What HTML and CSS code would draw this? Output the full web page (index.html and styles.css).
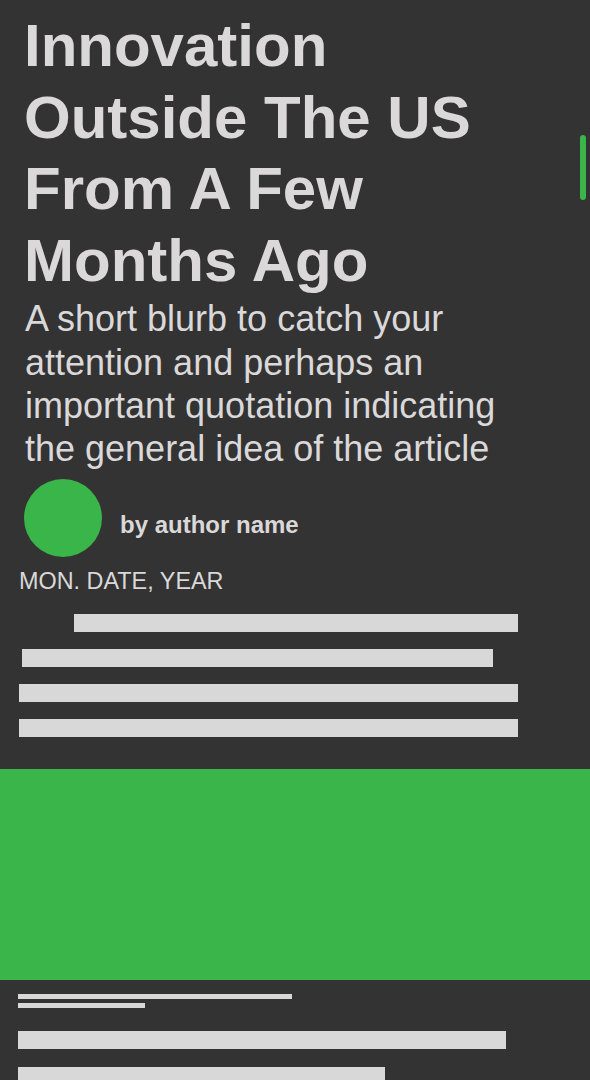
FILE: index.html
```html
<!DOCTYPE html>
<html lang="en">
<head>
<meta charset="utf-8">
<title>Article</title>
<link rel="stylesheet" href="styles.css">
</head>
<body>
<article class="article">
  <header class="intro">
    <h1 class="title">Innovation Outside The US From A Few Months Ago</h1>
    <p class="blurb">A short blurb to catch your attention and perhaps an important quotation indicating the general idea of the article</p>
    <div class="byline">
      <div class="avatar"></div>
      <span class="author">by author name</span>
    </div>
  </header>
  <div class="date">MON. DATE, YEAR</div>
  <div class="lines lines-lead">
    <div class="bar bar-1"></div>
    <div class="bar bar-2"></div>
    <div class="bar bar-3"></div>
    <div class="bar bar-3"></div>
  </div>
  <div class="hero"></div>
  <div class="caption">
    <div class="thin thin-1"></div>
    <div class="thin thin-2"></div>
  </div>
  <div class="lines lines-body">
    <div class="bar bar-4"></div>
    <div class="bar bar-5"></div>
  </div>
</article>
<div class="scroll-thumb"></div>
</body>
</html>
```

FILE: styles.css
```css
html, body {
  margin: 0;
  padding: 0;
  background: #333333;
}

body {
  font-family: "Liberation Sans", Arial, sans-serif;
  color: #dad8d9;
  width: 590px;
  height: 1080px;
  overflow: hidden;
}

.intro {
  padding: 10px 24px 0 24px;
}

.title {
  margin: 0;
  font-size: 60px;
  font-weight: 700;
  line-height: 71.6px;
}

.blurb {
  max-width: 505px;
  margin: 1px 0 0 1px;
  font-size: 36px;
  font-weight: 400;
  line-height: 43.2px;
}

.byline {
  display: flex;
  align-items: center;
  margin-top: 9px;
}

.avatar {
  width: 78px;
  height: 78px;
  border-radius: 50%;
  background: #3ab54a;
  flex: none;
}

.author {
  margin-left: 18px;
  padding-top: 13px;
  font-size: 24px;
  font-weight: 700;
  line-height: 27px;
}

.date {
  margin-top: 11px;
  padding-left: 19px;
  font-size: 23.4px;
  line-height: 27.6px;
  font-weight: 400;
}

.lines {
  display: flex;
  flex-direction: column;
  align-items: flex-start;
  gap: 17px;
  padding-left: 19px;
}

.lines-lead {
  margin-top: 18px;
}

.bar {
  height: 18px;
  background: #d9d8d9;
}

.bar-1 {
  width: 444px;
  margin-left: 55px;
}

.bar-2 {
  width: 471px;
  margin-left: 3px;
}

.bar-3 {
  width: 499px;
}

.hero {
  margin-top: 32px;
  height: 211px;
  background: #3ab54a;
}

.caption {
  display: flex;
  flex-direction: column;
  align-items: flex-start;
  gap: 4px;
  margin-top: 14px;
  padding-left: 18px;
}

.thin {
  height: 5px;
  background: #d9d8d9;
}

.thin-1 {
  width: 274px;
}

.thin-2 {
  width: 127px;
}

.lines-body {
  margin-top: 23px;
  padding-left: 18px;
  gap: 18px;
}

.bar-4 {
  width: 488px;
}

.bar-5 {
  width: 367px;
}

.scroll-thumb {
  position: fixed;
  top: 135px;
  right: 4px;
  width: 6px;
  height: 65px;
  border-radius: 3px;
  background: #3ab54a;
}
```
